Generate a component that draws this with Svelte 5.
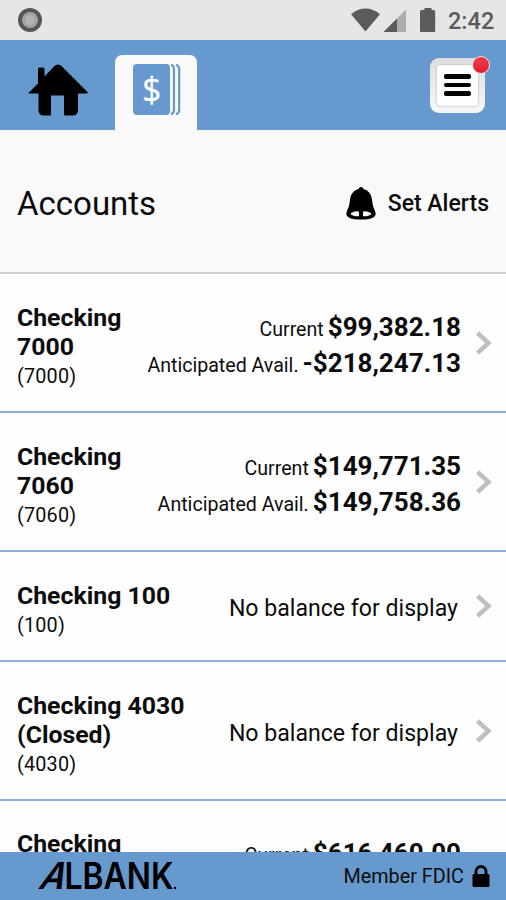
<script>
  const accounts = [
    { name: ['Checking', '7000'], id: '(7000)', balances: [['Current', '$99,382.18'], ['Anticipated Avail.', '-$218,247.13']] },
    { name: ['Checking', '7060'], id: '(7060)', balances: [['Current', '$149,771.35'], ['Anticipated Avail.', '$149,758.36']] },
    { name: ['Checking 100'], id: '(100)', balances: [] },
    { name: ['Checking 4030', '(Closed)'], id: '(4030)', balances: [] },
    { name: ['Checking'], id: '', balances: [['Current', '$616,460.00']], partial: true }
  ];
</script>

<div class="screen">
  <div class="status">
    <svg class="recorder" width="26" height="26" viewBox="0 0 26 26">
      <circle cx="13" cy="13" r="10" fill="#a2a2a2" stroke="#555" stroke-width="4" />
      <circle cx="13" cy="13" r="5" fill="#b4b4b4" />
    </svg>
    <div class="system">
      <svg width="88" height="28" viewBox="0 0 88 28">
        <path d="M1 8.200C9.500.7 21.500.7 30 8.200L15.500 25.500Z" fill="#5b5b5b" />
        <path d="M56 3.500V26H33.500Z" fill="#adadad" />
        <path d="M47 12.500V26H33.500Z" fill="#5b5b5b" />
        <path d="M74.500 2h7v2h2.200q1.500 0 1.500 1.500V25q0 1-1 1H71q-1 0-1-1V5.500Q70 4 71.500 4h3Z" fill="#5b5b5b" />
      </svg>
      <span class="time">2:42</span>
    </div>
  </div>

  <header>
    <div class="home">
      <svg width="60" height="54" viewBox="0 0 60 54">
        <path d="M.5 30 10 20.500V6q0-1.500 1.500-1.500H15q1.500 0 1.500 1.500v7.500L26.500 3Q30 0 33.500 3L59.500 29q1 1.500-1 1.500H50V47q0 5.500-5.500 5.500h-7.500q-1 0-1-1V32.500H23V51.500q0 1-1 1h-6q-5.500 0-5.500-5.500V30.500H1.500Q0 30.500.5 30Z" fill="#000" />
      </svg>
    </div>
    <div class="tab">
      <svg width="48" height="52" viewBox="0 0 48 52">
        <rect x="0" y="0" width="37" height="51" rx="4" fill="#6699cd" />
        <path d="M38 .8q3 1 3 4.500v40.400q0 3.500-3 4.500M43 .8q3.200 1 3.200 4.500v40.400q0 3.500-3.200 4.500" fill="none" stroke="#6699cd" stroke-width="2.200" />
        <text x="18.700" y="38" text-anchor="middle" fill="#fff" stroke="#fff" stroke-width=".3" font-size="35" font-family="'Open Sans', sans-serif" textLength="19" lengthAdjust="spacingAndGlyphs">$</text>
      </svg>
    </div>
    <div class="menu">
      <div class="face"><i></i><i></i><i></i></div>
      <b class="badge"></b>
    </div>
  </header>

  <section class="title">
    <h1>Accounts</h1>
    <div class="alerts">
      <svg width="30" height="34" viewBox="0 0 30 34">
        <path fill-rule="evenodd" d="M15 0q2 0 2.500 2C23.500 4 25.500 8 26 13q.4 6 3 11c2.500 6-2.500 8.500-14 8.500S-1.500 30 1 24Q3.600 19 4 13C4.500 8 6.500 4 12.500 2Q13 0 15 0ZM4.500 27q2 2.300 8.500 2.300V25.500q0-1.200-1.500-1.200Q5.500 24.700 4.500 27Zm12.500 2.300q6.500 0 8.500-2.300-1-2.300-7-2.700-1.500 0-1.500 1.200Z" fill="#000" />
      </svg>
      <span>Set Alerts</span>
    </div>
  </section>

  <main>
    {#each accounts as account}
      <div class="row">
        <div class="name" class:raised={account.partial}>
          {#each account.name as line}<strong>{line}</strong>{/each}
          {#if account.id}<span>{account.id}</span>{/if}
        </div>
        <div class="values" class:first-only={account.partial}>
          {#each account.balances as [label, amount]}
            <div class="balance"><span class="label">{label}</span><span class="amount">{amount}</span></div>
          {:else}
            <span class="none">No balance for display</span>
          {/each}
        </div>
        {#if !account.partial}
          <svg class="chevron" width="18" height="26" viewBox="0 0 18 26">
            <path d="M2.500 3 13.500 13 2.500 23" fill="none" stroke="#bfbfbf" stroke-width="4.400" />
          </svg>
        {/if}
      </div>
    {/each}
  </main>

  <footer>
    <svg class="logo" width="142" height="32" viewBox="0 0 142 32">
      <g font-family="Inter, 'Liberation Sans', sans-serif" font-weight="600" font-size="37">
        <text x="0" y="29" textLength="25" lengthAdjust="spacingAndGlyphs" transform="translate(11.500 0) skewX(-23)">A</text>
        <text x="26.500" y="29" textLength="109" lengthAdjust="spacingAndGlyphs">LBANK</text>
      </g>
      <circle cx="137" cy="28" r="1.200" />
    </svg>
    <div class="member">
      <span>Member FDIC</span>
      <svg width="18" height="24" viewBox="0 0 18 24">
        <path d="M4 11V7.500a5 5 0 0 1 10 0V11" fill="none" stroke="#000" stroke-width="3" />
        <rect x=".5" y="10" width="17" height="13" rx="1.500" />
      </svg>
    </div>
  </footer>
</div>

<style>
  .screen {
    width: 506px;
    height: 900px;
    display: flex;
    flex-direction: column;
    overflow: hidden;
    background: #fefefe;
    color: #0c0c0c;
    font-family: Roboto, sans-serif;
  }
  svg { display: block; flex: none; }
  .status {
    flex: 0 0 40px;
    box-sizing: border-box;
    display: flex;
    justify-content: space-between;
    align-items: center;
    padding: 0 12px 0 17px;
    background: #e6e6e6;
  }
  .system { display: flex; align-items: center; gap: 10px; }
  .time { width: 46px; color: #5b5b5b; font-size: 23.500px; font-weight: 500; line-height: 36px; padding-top: 2px; white-space: nowrap; }
  header {
    flex: 0 0 90px;
    box-sizing: border-box;
    display: flex;
    padding: 0 21px 0 28px;
    background: #6699cd;
  }
  .home { width: 87px; padding-top: 23px; box-sizing: border-box; }
  .tab {
    width: 82px;
    height: 75px;
    margin-top: 15px;
    box-sizing: border-box;
    padding: 9px 0 0 18px;
    border-radius: 7px 7px 0 0;
    background: #fafafa;
  }
  .menu {
    position: relative;
    box-sizing: border-box;
    width: 55px;
    height: 55px;
    margin: 18px 0 0 auto;
    padding: 7px;
    border-radius: 9px;
    background: linear-gradient(#dedede, #f7f7f7);
  }
  .face {
    box-sizing: border-box;
    height: 41px;
    display: flex;
    flex-direction: column;
    align-items: center;
    gap: 4px;
    padding-top: 9px;
    background: #fdfdfd;
    border-radius: 3px;
    box-shadow: 0 0 2px #999;
  }
  .face i { width: 27px; height: 4.500px; border-radius: 2px; background: #000; }
  .badge {
    position: absolute;
    top: -2px;
    right: -5px;
    width: 16px;
    height: 16px;
    border: 1.500px solid #f8dfe3;
    border-radius: 50%;
    background: linear-gradient(#ee3d4c, #e01c30);
  }
  .title {
    flex: 0 0 144px;
    box-sizing: border-box;
    display: flex;
    justify-content: space-between;
    align-items: center;
    padding: 5px 17px 0 17px;
    border-bottom: 2px solid #d2d2d2;
    background: #f9f9f9;
  }
  h1 { margin: 0; font-size: 33px; font-weight: 400; line-height: 40px; }
  .alerts { display: flex; align-items: center; gap: 12px; font-size: 23px; font-weight: 500; }
  main { flex: 1 1 0; min-height: 0; overflow: hidden; }
  .row {
    box-sizing: border-box;
    display: flex;
    align-items: center;
    padding: 0 13px 0 17px;
    border-bottom: 2px solid #8dafd8;
  }
  .name { flex: none; padding: 29px 0 21px; display: flex; flex-direction: column; line-height: 29px; white-space: nowrap; }
  .name.raised { padding-top: 28px; }
  .name strong { font-size: 24.800px; font-weight: 700; }
  .name span { height: 29px; line-height: 31px; font-size: 19.800px; letter-spacing: .2px; }
  .values { flex: 1; padding-top: 5px; text-align: right; white-space: nowrap; }
  .values.first-only { align-self: flex-start; padding: 34px 32px 0 0; }
  .balance { display: flex; justify-content: flex-end; align-items: baseline; gap: 4px; height: 36px; line-height: 36px; }
  .label { font-size: 19.600px; }
  .amount { font-size: 26px; font-weight: 700; }
  .none { font-size: 23.100px; padding-right: 3px; }
  .chevron { margin-left: 14px; }
  footer {
    flex: 0 0 48px;
    box-sizing: border-box;
    display: flex;
    justify-content: space-between;
    align-items: center;
    padding: 0 16px 0 38px;
    background: #6699cd;
  }
  .member { display: flex; align-items: center; gap: 8px; font-size: 19.800px; }
</style>
